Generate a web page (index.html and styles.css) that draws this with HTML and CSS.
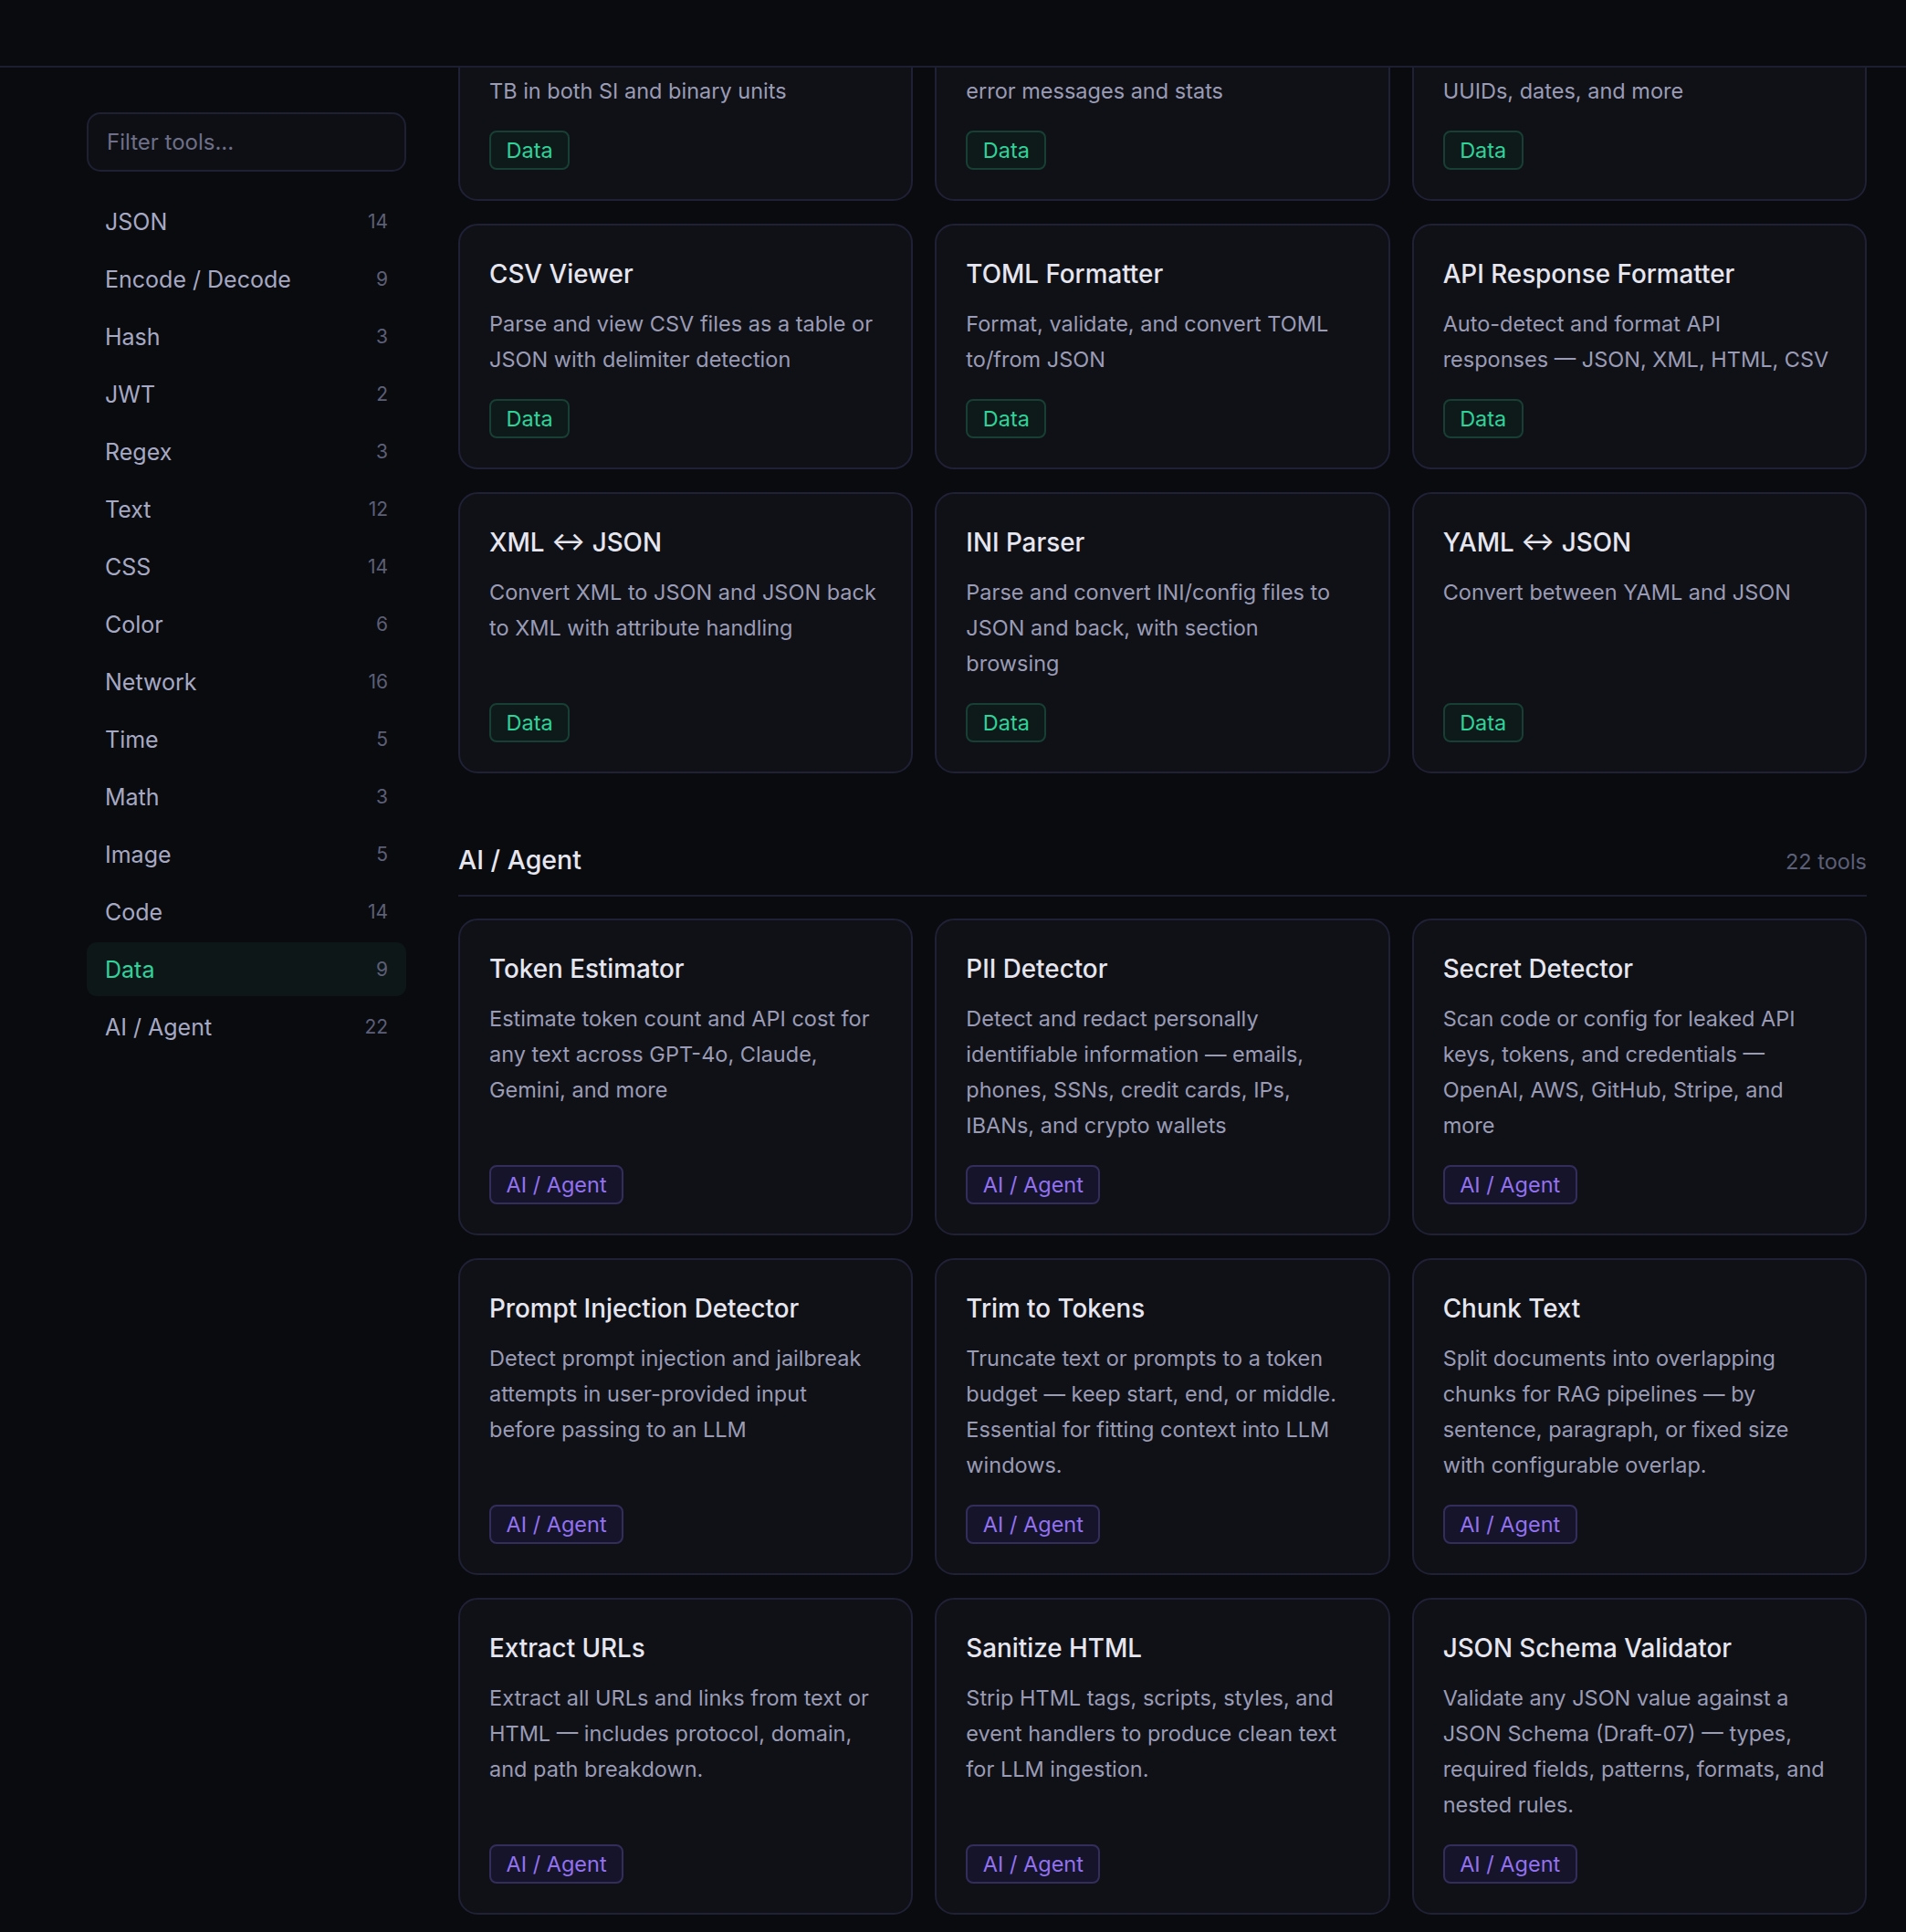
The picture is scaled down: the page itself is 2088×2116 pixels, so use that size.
FILE: index.html
```html
<!DOCTYPE html>
<html lang="en">
<head>
<meta charset="utf-8">
<title>Tools</title>
<link rel="stylesheet" href="styles.css">
</head>
<body>
<header class="topbar"></header>
<div class="layout">
  <aside class="sidebar">
    <input class="filter" type="text" placeholder="Filter tools...">
    <nav class="cats">
      <a class="cat"><span class="cat-name">JSON</span><span class="cat-count">14</span></a>
      <a class="cat"><span class="cat-name">Encode / Decode</span><span class="cat-count">9</span></a>
      <a class="cat"><span class="cat-name">Hash</span><span class="cat-count">3</span></a>
      <a class="cat"><span class="cat-name">JWT</span><span class="cat-count">2</span></a>
      <a class="cat"><span class="cat-name">Regex</span><span class="cat-count">3</span></a>
      <a class="cat"><span class="cat-name">Text</span><span class="cat-count">12</span></a>
      <a class="cat"><span class="cat-name">CSS</span><span class="cat-count">14</span></a>
      <a class="cat"><span class="cat-name">Color</span><span class="cat-count">6</span></a>
      <a class="cat"><span class="cat-name">Network</span><span class="cat-count">16</span></a>
      <a class="cat"><span class="cat-name">Time</span><span class="cat-count">5</span></a>
      <a class="cat"><span class="cat-name">Math</span><span class="cat-count">3</span></a>
      <a class="cat"><span class="cat-name">Image</span><span class="cat-count">5</span></a>
      <a class="cat"><span class="cat-name">Code</span><span class="cat-count">14</span></a>
      <a class="cat active"><span class="cat-name">Data</span><span class="cat-count">9</span></a>
      <a class="cat"><span class="cat-name">AI / Agent</span><span class="cat-count">22</span></a>
    </nav>
  </aside>
  <main class="content">
    <section class="section section-scrolled">
      <div class="grid">
        <article class="card">
          <h3 class="card-title">Byte Converter</h3>
          <p class="card-desc">Convert between bytes, KB, MB, GB,<br>TB in both SI and binary units</p>
          <span class="tag tag-data">Data</span>
        </article>
        <article class="card">
          <h3 class="card-title">CSV Validator</h3>
          <p class="card-desc">Validate CSV structure with detailed<br>error messages and stats</p>
          <span class="tag tag-data">Data</span>
        </article>
        <article class="card">
          <h3 class="card-title">Fake Data Generator</h3>
          <p class="card-desc">Generate random names, emails,<br>UUIDs, dates, and more</p>
          <span class="tag tag-data">Data</span>
        </article>
        <article class="card">
          <h3 class="card-title">CSV Viewer</h3>
          <p class="card-desc">Parse and view CSV files as a table or JSON with delimiter detection</p>
          <span class="tag tag-data">Data</span>
        </article>
        <article class="card">
          <h3 class="card-title">TOML Formatter</h3>
          <p class="card-desc">Format, validate, and convert TOML to/from JSON</p>
          <span class="tag tag-data">Data</span>
        </article>
        <article class="card">
          <h3 class="card-title">API Response Formatter</h3>
          <p class="card-desc">Auto-detect and format API responses — JSON, XML, HTML, CSV</p>
          <span class="tag tag-data">Data</span>
        </article>
        <article class="card">
          <h3 class="card-title">XML ↔ JSON</h3>
          <p class="card-desc">Convert XML to JSON and JSON back to XML with attribute handling</p>
          <span class="tag tag-data">Data</span>
        </article>
        <article class="card">
          <h3 class="card-title">INI Parser</h3>
          <p class="card-desc">Parse and convert INI/config files to JSON and back, with section browsing</p>
          <span class="tag tag-data">Data</span>
        </article>
        <article class="card">
          <h3 class="card-title">YAML ↔ JSON</h3>
          <p class="card-desc">Convert between YAML and JSON</p>
          <span class="tag tag-data">Data</span>
        </article>
      </div>
    </section>

    <section class="section">
      <div class="section-head">
        <h2 class="section-title">AI / Agent</h2>
        <span class="section-count">22 tools</span>
      </div>
      <div class="grid">
        <article class="card">
          <h3 class="card-title">Token Estimator</h3>
          <p class="card-desc">Estimate token count and API cost for any text across GPT-4o, Claude, Gemini, and more</p>
          <span class="tag tag-ai">AI / Agent</span>
        </article>
        <article class="card">
          <h3 class="card-title">PII Detector</h3>
          <p class="card-desc">Detect and redact personally identifiable information — emails, phones, SSNs, credit cards, IPs, IBANs, and crypto wallets</p>
          <span class="tag tag-ai">AI / Agent</span>
        </article>
        <article class="card">
          <h3 class="card-title">Secret Detector</h3>
          <p class="card-desc">Scan code or config for leaked API keys, tokens, and credentials — OpenAI, AWS, GitHub, Stripe, and more</p>
          <span class="tag tag-ai">AI / Agent</span>
        </article>
        <article class="card">
          <h3 class="card-title">Prompt Injection Detector</h3>
          <p class="card-desc">Detect prompt injection and jailbreak attempts in user-provided input before passing to an LLM</p>
          <span class="tag tag-ai">AI / Agent</span>
        </article>
        <article class="card">
          <h3 class="card-title">Trim to Tokens</h3>
          <p class="card-desc">Truncate text or prompts to a token budget — keep start, end, or middle. Essential for fitting context into LLM windows.</p>
          <span class="tag tag-ai">AI / Agent</span>
        </article>
        <article class="card">
          <h3 class="card-title">Chunk Text</h3>
          <p class="card-desc">Split documents into overlapping chunks for RAG pipelines — by sentence, paragraph, or fixed size with configurable overlap.</p>
          <span class="tag tag-ai">AI / Agent</span>
        </article>
        <article class="card">
          <h3 class="card-title">Extract URLs</h3>
          <p class="card-desc">Extract all URLs and links from text or HTML — includes protocol, domain, and path breakdown.</p>
          <span class="tag tag-ai">AI / Agent</span>
        </article>
        <article class="card">
          <h3 class="card-title">Sanitize HTML</h3>
          <p class="card-desc">Strip HTML tags, scripts, styles, and event handlers to produce clean text for LLM ingestion.</p>
          <span class="tag tag-ai">AI / Agent</span>
        </article>
        <article class="card">
          <h3 class="card-title">JSON Schema Validator</h3>
          <p class="card-desc">Validate any JSON value against a JSON Schema (Draft-07) — types, required fields, patterns, formats, and nested rules.</p>
          <span class="tag tag-ai">AI / Agent</span>
        </article>
      </div>
    </section>
  </main>
</div>
</body>
</html>
```
FILE: styles.css
```css
* { box-sizing: border-box; }

html, body {
  margin: 0;
  padding: 0;
  background: #0a0b0e;
  overflow: hidden;
}

body {
  font-family: Inter, "Noto Sans", "Liberation Sans", sans-serif;
  color: #e4e4ee;
  height: 2116px;
}

.topbar {
  position: fixed;
  top: 0;
  left: 0;
  right: 0;
  height: 74px;
  background: #0a0b0e;
  border-bottom: 2px solid #1e1e32;
  z-index: 10;
}

.layout {
  display: flex;
  padding: 0 43px 0 95px;
}

.sidebar {
  width: 350px;
  flex-shrink: 0;
  padding-top: 123px;
}

.filter {
  display: block;
  width: 100%;
  height: 65px;
  background: #0e0f14;
  border: 2px solid #1f2034;
  border-radius: 15px;
  padding: 0 20px;
  font-family: inherit;
  font-size: 24px;
  color: #d0d2e0;
  outline: none;
}
.filter::placeholder { color: #6d7088; }

.cats {
  display: flex;
  flex-direction: column;
  gap: 4px;
  margin-top: 25px;
}

.cat {
  display: flex;
  align-items: center;
  justify-content: space-between;
  height: 59px;
  padding: 0 20px;
  border-radius: 11px;
  color: #a6a9c4;
  font-size: 25px;
}
.cat-count {
  font-size: 21px;
  color: #5c5f78;
}
.cat.active {
  background: #0e1718;
  color: #2fd39c;
}

.content {
  flex: 1;
  min-width: 0;
  margin-left: 57px;
}

.section-scrolled {
  margin-top: -49px;
}

.grid {
  display: grid;
  grid-template-columns: repeat(3, 1fr);
  column-gap: 24px;
  row-gap: 25px;
}

.card {
  display: flex;
  flex-direction: column;
  align-items: flex-start;
  background: #101116;
  border: 2px solid #202036;
  border-radius: 21px;
  padding: 32px 36px 32px 32px;
}

.card-title {
  margin: 0;
  font-size: 27.8px;
  line-height: 42px;
  font-weight: 500;
  color: #e6e6f0;
}

.card-desc {
  margin: 14px 0 24px;
  font-size: 23.5px;
  line-height: 39px;
  color: #9a9cb6;
}

.tag {
  margin-top: auto;
  display: inline-flex;
  align-items: center;
  height: 43px;
  padding: 0 16.5px;
  border-radius: 8px;
  font-size: 23.5px;
  border: 2px solid;
}
.tag-data {
  background: #0e1a19;
  border-color: #173f33;
  color: #2ed39a;
}
.tag-ai {
  background: #16142a;
  border-color: #332d5c;
  color: #9272f2;
}

.section-head {
  display: flex;
  align-items: baseline;
  justify-content: space-between;
  margin-top: 74px;
  padding-bottom: 17px;
  border-bottom: 2px solid #1e1e32;
  margin-bottom: 24px;
}
.section-title {
  margin: 0;
  font-size: 28.5px;
  line-height: 42px;
  font-weight: 500;
  color: #e6e6f0;
}
.section-count {
  font-size: 23.5px;
  color: #5c5f78;
}
```
